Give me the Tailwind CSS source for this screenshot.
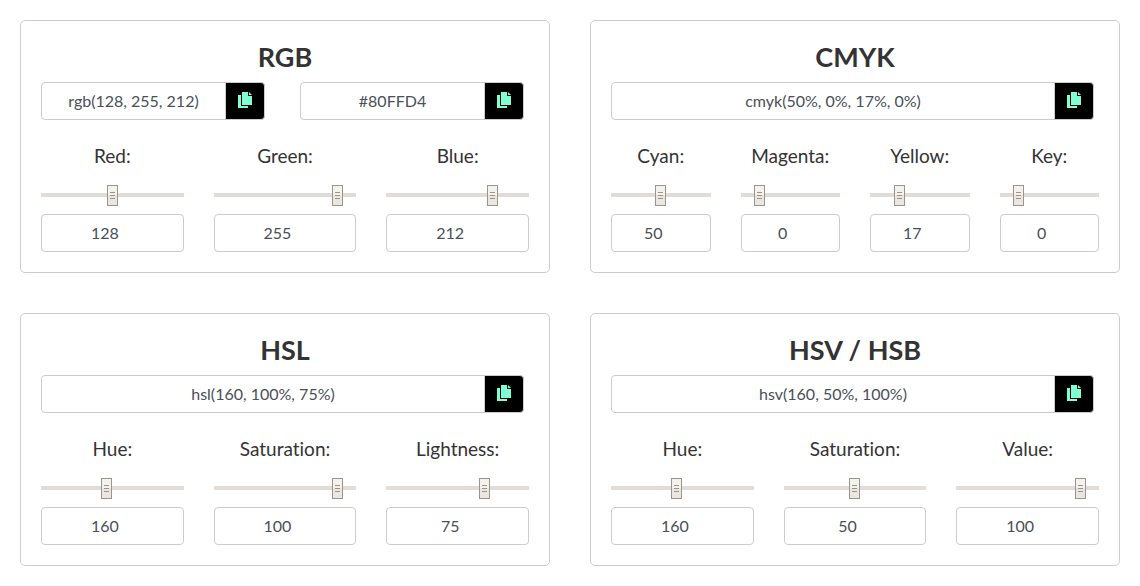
<!DOCTYPE html>
<html lang="en">
<head>
<meta charset="utf-8">
<meta name="viewport" content="width=device-width, initial-scale=1">
<title>Color Converter</title>
<script src="https://cdn.jsdelivr.net/npm/@tailwindcss/browser@4"></script>
</head>
<body class="bg-white font-[Lato,sans-serif] text-[#333] [font-variant-ligatures:none]">
<main id="panels" class="grid grid-cols-2 gap-10 p-5"></main>
<script>
const panels = [
  { title: 'RGB', codes: ['rgb(128, 255, 212)', '#80FFD4'], cols: 'grid grid-cols-3 gap-x-[30px]',
    channels: [['Red', 128, 255], ['Green', 255, 255], ['Blue', 212, 255]] },
  { title: 'CMYK', codes: ['cmyk(50%, 0%, 17%, 0%)'], cols: 'grid grid-cols-4 gap-x-[30px]',
    channels: [['Cyan', 50, 100], ['Magenta', 0, 100], ['Yellow', 17, 100], ['Key', 0, 100]] },
  { title: 'HSL', codes: ['hsl(160, 100%, 75%)'], cols: 'grid grid-cols-3 gap-x-[30px]',
    channels: [['Hue', 160, 360], ['Saturation', 100, 100], ['Lightness', 75, 100]] },
  { title: 'HSV / HSB', codes: ['hsv(160, 50%, 100%)'], cols: 'grid grid-cols-3 gap-x-[30px]',
    channels: [['Hue', 160, 360], ['Saturation', 50, 100], ['Value', 100, 100]] },
];

const codeField = (title, code) => `
  <div class="flex min-w-0 flex-1">
    <input type="text" value="${code}" aria-label="${title} value" class="h-[38px] w-full min-w-0 flex-1 rounded-l border border-[#ccc] px-3 pb-0.5 text-center text-base text-[#495057]">
    <button type="button" aria-label="Copy ${code}" class="-ml-px flex h-[38px] w-10 items-center justify-center rounded-r border border-[#ccc] bg-black text-[#80ffd4]">
      <svg class="mb-0.5 h-4 w-[14px]" viewBox="0 0 14 16" fill="currentColor" aria-hidden="true">
        <path d="M0 3h3v11h7v2H0z"/><path d="M4 0h6v4h4v9H4z"/><path d="M11 0l3 3h-3z"/>
      </svg>
    </button>
  </div>`;

const channel = (id, [name, value, max]) => `
  <div class="flex min-w-0 flex-col">
    <label for="${id}" class="text-center text-[19px] leading-7">${name}:</label>
    <input type="range" min="0" max="${max}" value="${value}" aria-label="${name} slider" class="mt-[15px] h-[21px] w-full appearance-none bg-[linear-gradient(#e1dcd7,#e1dcd7)] bg-[length:100%_4px] bg-[position:0_8px] bg-no-repeat px-[13px] [&::-webkit-slider-thumb]:h-[21px] [&::-webkit-slider-thumb]:w-[11px] [&::-webkit-slider-thumb]:appearance-none [&::-webkit-slider-thumb]:border [&::-webkit-slider-thumb]:border-[#9b948b] [&::-webkit-slider-thumb]:[background:linear-gradient(#9b948b,#9b948b)_2px_6px/5px_1px_no-repeat,linear-gradient(#9b948b,#9b948b)_2px_9px/5px_1px_no-repeat,linear-gradient(#9b948b,#9b948b)_2px_12px/5px_1px_no-repeat,linear-gradient(#f4f2ef_50%,#ebe6e2_50%)]">
    <input id="${id}" type="number" min="0" max="${max}" value="${value}" class="mt-2 h-[38px] w-full rounded border border-[#ccc] px-3 pb-0.5 text-center text-base text-[#495057]">
  </div>`;

document.getElementById('panels').innerHTML = panels.map((p, i) => `
  <section class="rounded-[5px] border border-[#ccc] p-5">
    <h2 class="pb-[10px] text-center text-[27px] font-bold leading-[31px]">${p.title}</h2>
    <div class="flex gap-[35px] pr-[5px]">${p.codes.map(c => codeField(p.title, c)).join('')}</div>
    <div class="mt-[22px] ${p.cols}">${p.channels.map((c, j) => channel('channel-' + i + '-' + j, c)).join('')}</div>
  </section>`).join('');
</script>
</body>
</html>
